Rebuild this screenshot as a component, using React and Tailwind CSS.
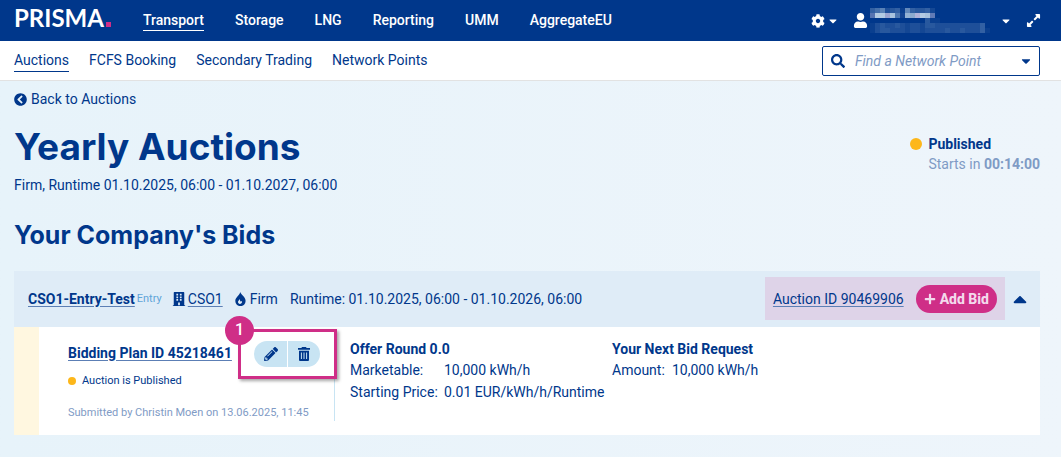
import { useState } from "react";
import {
  FaBuilding,
  FaCaretDown,
  FaCaretUp,
  FaChevronCircleLeft,
  FaCog,
  FaExpandAlt,
  FaPencilAlt,
  FaPlus,
  FaSearch,
  FaUser,
} from "react-icons/fa";

const mainNav = ["Transport", "Storage", "LNG", "Reporting", "UMM", "AggregateEU"];
const subNav = ["Auctions", "FCFS Booking", "Secondary Trading", "Network Points"];

// opacity (in twentieths) of each block of the hidden user name and company
const maskRows = [
  [5, 7, 9, 3, 4, 5, 1, 10, 5, 4, 4, 5, 2],
  [9, 18, 18, 16, 17, 8, 2, 15, 14, 18, 18, 17, 10],
  [0, 0, 0, 0, 0, 0, 0, 0, 0, 0, 0, 4, 1, 1],
  [1, 3, 4, 3, 3, 4, 3, 2, 3, 3, 2, 4, 4, 3, 3, 3, 3, 3, 3, 3, 3, 3, 5],
  [1, 3, 4, 4, 3, 3, 3, 2, 3, 3, 2, 3, 3, 3, 3, 4, 3, 3, 4, 3, 3, 3, 5, 1],
];

const MaskedUser = () => (
  <svg width="120" height="25" viewBox="0 0 120 25" shapeRendering="crispEdges" aria-hidden="true">
    {maskRows.map((row, y) =>
      row.map((value, x) => (
        <rect
          key={`${x}-${y}`}
          x={x * 5}
          y={y * 5}
          width="5"
          height="5"
          fill={y === 1 && x % 3 === 0 ? "#c2c0e2" : "#c6dcec"}
          opacity={value / 20}
        />
      ))
    )}
  </svg>
);

const FlameIcon = ({ className }) => (
  <svg width="11" height="14" viewBox="0 0 11 14" fill="currentColor" className={className} aria-hidden="true">
    <path
      fillRule="evenodd"
      d="M5.2 0C6 2.6 10.6 4.9 10.6 9a5.1 5.1 0 0 1-10.3 0c0-1.9 1.1-3.2 2.1-4.4C3.6 3.2 4.8 2.1 5.2 0ZM4.6 7C4.4 8.100 3 8.600 3 10.100c0 1.100.8 1.900 1.900 1.900 1.200 0 2.100-.8 2.100-1.900 0-.4-.1-.7-.3-1-.3.400-.6.500-1 .4C5 9.200 5.200 8.100 4.600 7Z"
    />
  </svg>
);

const TrashIcon = () => (
  <svg width="12" height="14" viewBox="0 0 12 14" fill="currentColor" aria-hidden="true">
    <path d="M4 0h4l.6 1H12v1.8H0V1h3.400L4 0Z" />
    <path
      fillRule="evenodd"
      d="M1 3.8h10V13a1 1 0 0 1-1 1H2a1 1 0 0 1-1-1V3.800Zm1.900 1.700V12h1V5.500h-1Zm2.600 0V12h1V5.500h-1Zm2.600 0V12h1V5.500h-1Z"
    />
  </svg>
);

const TopBar = () => (
  <header className="flex h-[41px] items-center bg-[#00378b] px-3.5 text-white">
    <a
      href="#"
      className="flex items-baseline pb-1.5 font-['Lato',sans-serif] text-2xl leading-none font-bold"
    >
      PRISMA
      <span className="ml-0.5 size-[5px] bg-[#cf2e87]" />
    </a>
    <nav className="ml-8 flex gap-[31px] leading-5 font-medium">
      {mainNav.map((item, i) => (
        <a
          key={item}
          href="#"
          className={i === 0 ? "border-b border-white" : "border-b border-transparent"}
        >
          {item}
        </a>
      ))}
    </nav>
    <div className="ml-auto flex items-center">
      <button type="button" aria-label="Settings" className="flex items-center gap-0.5">
        <FaCog size={14} />
        <FaCaretDown size={12} />
      </button>
      <button type="button" aria-label="Account" className="ml-3.5 flex items-center">
        <FaUser size={15} className="mr-0.5" />
        <MaskedUser />
        <FaCaretDown size={12} className="ml-2.5" />
      </button>
      <button type="button" aria-label="Full screen" className="ml-3.5 pr-1.5">
        <FaExpandAlt size={15} />
      </button>
    </div>
  </header>
);

const SubBar = () => (
  <div className="flex h-10 items-center border-b border-[#e2e2e2] bg-white px-3.5">
    <nav className="flex gap-5 leading-[22px]">
      {subNav.map((item, i) => (
        <a
          key={item}
          href="#"
          className={i === 0 ? "border-b border-[#00378b]" : "border-b border-transparent"}
        >
          {item}
        </a>
      ))}
    </nav>
    <div className="mr-[7px] ml-auto flex h-[30px] w-[218px] items-center rounded-xs border border-[#00378b] pr-1.5 pl-2">
      <FaSearch size={14} className="shrink-0" />
      <input
        type="text"
        aria-label="Find a Network Point"
        placeholder="Find a Network Point"
        className="ml-2.5 min-w-0 flex-1 italic outline-none placeholder:text-[#7f9bc5]"
      />
      <FaCaretDown size={14} className="shrink-0" />
    </div>
  </div>
);

const BidActions = () => (
  <div className="relative flex h-[50px] w-[99px] items-center border-3 border-[#cf2e87] pl-[13px] shadow-[2px_2px_3px_rgba(0,0,0,0.35)]">
    <span className="absolute -top-4 -left-4 flex size-[29px] items-center justify-center rounded-full bg-[#cf2e87] text-base font-medium text-white">
      1
    </span>
    <div className="flex gap-px">
      <button
        type="button"
        aria-label="Edit bid"
        className="flex h-[26px] w-[33px] items-center justify-center rounded-l-full bg-[#c8e4f3]"
      >
        <FaPencilAlt size={14} />
      </button>
      <button
        type="button"
        aria-label="Delete bid"
        className="flex h-[26px] w-8 items-center justify-center rounded-r-full bg-[#c8e4f3]"
      >
        <TrashIcon />
      </button>
    </div>
  </div>
);

const BidDetails = () => (
  <div className="flex min-h-[108px] bg-white">
    <div className="w-[25px] shrink-0 bg-[#fff7e0]" />
    <div className="my-3.5 flex w-[296px] shrink-0 border-r border-[#c8e4f3] pl-[29px]">
      <div className="w-[170px] shrink-0 pt-0.5 whitespace-nowrap">
        <a href="#" className="font-bold underline decoration-[#5c7fb5] underline-offset-2">
          Bidding Plan ID 45218461
        </a>
        <p className="mt-2.5 flex items-center gap-1.5 text-[11px] leading-4">
          <span className="size-2 rounded-full bg-[#fdb71a]" />
          Auction is Published
        </p>
        <p className="mt-4 text-[11px] leading-4 text-[#7f9bc5]">
          Submitted by Christin Moen on 13.06.2025, 11:45
        </p>
      </div>
      <div className="-mt-3">
        <BidActions />
      </div>
    </div>
    <div className="w-[263px] shrink-0 pt-3 pl-[15px] leading-[22px]">
      <h3 className="leading-5 font-bold">Offer Round 0.0</h3>
      <dl className="grid grid-cols-[94px_auto] whitespace-nowrap">
        <dt>Marketable:</dt>
        <dd>10,000 kWh/h</dd>
        <dt>Starting Price:</dt>
        <dd>0.01 EUR/kWh/h/Runtime</dd>
      </dl>
    </div>
    <div className="pt-3 pl-3.5 leading-[22px]">
      <h3 className="leading-5 font-bold">Your Next Bid Request</h3>
      <dl className="grid grid-cols-[60px_auto]">
        <dt>Amount:</dt>
        <dd>10,000 kWh/h</dd>
      </dl>
    </div>
  </div>
);

const BidCard = () => {
  const [open, setOpen] = useState(true);

  return (
    <section className="mt-5">
      <div className="flex h-14 items-center bg-[#dfecf7] pl-3.5">
        <a href="#" className="font-bold underline decoration-[#5c7fb5] underline-offset-2">
          CSO1-Entry-Test
        </a>
        <span className="ml-0.5 text-[11px] text-[#5fa5d9]">Entry</span>
        <FaBuilding size={14} className="ml-2.5" />
        <a href="#" className="ml-0.5 underline decoration-[#5c7fb5] underline-offset-2">
          CSO1
        </a>
        <FlameIcon className="ml-3" />
        <span className="ml-1">Firm</span>
        <span className="ml-3">Runtime: 01.10.2025, 06:00 - 01.10.2026, 06:00</span>
        <div className="ml-auto flex h-[43px] items-center bg-[#ded3e8] pr-2 pl-2">
          <a href="#" className="underline decoration-[#5c7fb5] underline-offset-2">
            Auction ID 90469906
          </a>
          <button
            type="button"
            className="ml-3 flex h-7 items-center gap-1 rounded-full bg-[#cf2e87] px-2 font-extrabold text-[#f3d9ec]"
          >
            <FaPlus size={12} />
            Add Bid
          </button>
        </div>
        <button
          type="button"
          aria-label="Toggle bid details"
          onClick={() => setOpen(!open)}
          className="flex w-[35px] justify-center pr-1.5"
        >
          <FaCaretUp size={22} />
        </button>
      </div>
      {open && <BidDetails />}
    </section>
  );
};

const App = () => {
  return (
    <div className="flex min-h-screen flex-col bg-white font-['Roboto',sans-serif] text-sm text-[#00378b]">
      <TopBar />
      <SubBar />
      <main className="flex-1 bg-linear-to-r from-[#e7f3fa] to-[#eef5fb] pt-2 pr-[21px] pl-3.5">
        <a href="#" className="inline-flex items-center gap-1">
          <FaChevronCircleLeft size={13} />
          Back to Auctions
        </a>
        <div className="mt-3 flex items-start justify-between">
          <div>
            <h1 className="font-['Inter',sans-serif] text-[37px] leading-[48px] font-bold">
              Yearly Auctions
            </h1>
            <p className="mt-1">Firm, Runtime 01.10.2025, 06:00 - 01.10.2027, 06:00</p>
          </div>
          <div className="mt-[11px] flex gap-1.5">
            <span className="mt-1 size-3 rounded-full bg-[#fdb71a]" />
            <div>
              <p className="font-bold">Published</p>
              <p className="text-[#7f9bc5]">
                Starts in <strong>00:14:00</strong>
              </p>
            </div>
          </div>
        </div>
        <h2 className="mt-6 font-['Inter',sans-serif] text-[25px] leading-8 font-bold">
          Your Company's Bids
        </h2>
        <BidCard />
      </main>
    </div>
  );
};

export default App;
